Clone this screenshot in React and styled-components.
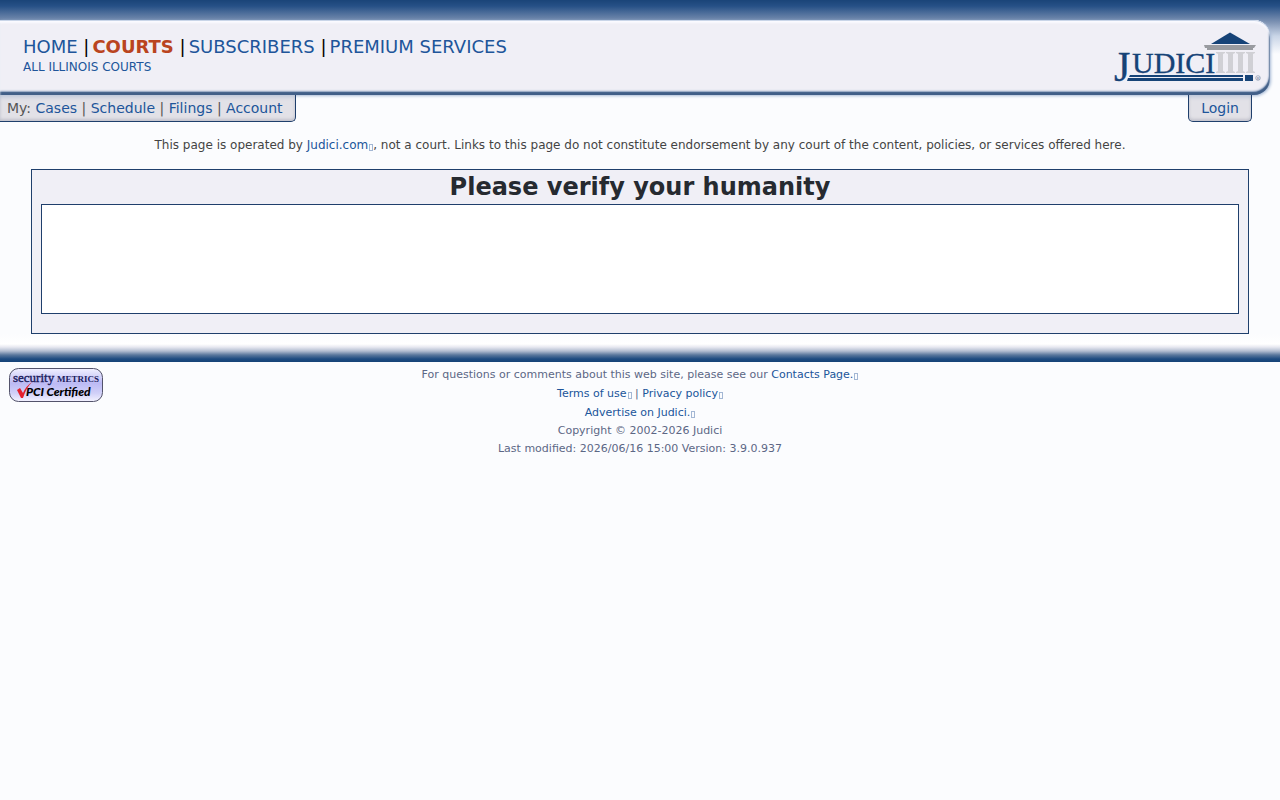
import React from 'react'
import styled, { createGlobalStyle } from 'styled-components'

const GlobalStyle = createGlobalStyle`
  body {
    margin: 0;
    background-color: #fbfcfe;
    color: #444;
    font-family: "DejaVu Sans", sans-serif;
    font-size: 12px;
  }
`

const Link = styled.a`
  color: #20559a;
  text-decoration: none;

  &:hover {
    text-decoration: underline;
  }
`

const Top = styled.div`
  padding: 20px 10px 0 0;
  background: linear-gradient(#1a4478 0, #265086 6px, #7d92b3 22px, #c9d5e7 36px, #fbfcfe 54px);
`

const Header = styled.header`
  box-sizing: border-box;
  display: flex;
  justify-content: space-between;
  align-items: flex-start;
  height: 75px;
  padding: 12px 9px 0 23px;
  border-radius: 0 16px 16px 0;
  background-color: #f0eff6;
  box-shadow: inset 0 1px 0 #c9d5e8, inset 0 3px 2px #fafaff, inset -1px -3px 1px #415f88,
    inset -1px -4px 2px #91a5c3, 1px 1px 3px #a7bad6;
`

const MainNav = styled.nav`
  display: flex;
  padding-top: 4px;
  font-size: 18px;
  line-height: 21px;
  color: #000;
`

const NavItem = styled(Link)`
  color: ${({ $active }) => ($active ? '#ba4420' : '#20559a')};
  font-weight: ${({ $active }) => ($active ? 'bold' : 'normal')};
`

const Divider = styled.span`
  padding-right: 3px;
  white-space: pre;
`

const SubNav = styled.nav`
  line-height: 20px;
`

const Tabs = styled.div`
  display: flex;
  justify-content: space-between;
  padding-right: 28px;
`

const Tab = styled.nav`
  box-sizing: border-box;
  height: 27px;
  padding: ${({ $left }) => ($left ? '0 12px 0 7px' : '0 12px')};
  border: 1px solid #1f3f6c;
  border-top: 0;
  border-left-width: ${({ $left }) => ($left ? '0' : '1px')};
  border-radius: ${({ $left }) => ($left ? '0 0 5px 0' : '0 0 5px 5px')};
  background-color: #e2e1e7;
  box-shadow: inset 0 4px 4px -2px #b8c4d8, inset 0 -2px 3px #c3c3cc;
  color: #555;
  font-size: 14px;
  line-height: 26px;
`

const Notice = styled.p`
  margin: 0;
  padding: 15px 16px;
  line-height: 17px;
  text-align: center;
`

const Missing = styled.span`
  display: inline-block;
  box-sizing: border-box;
  width: 4px;
  height: 7px;
  margin-left: 1px;
  border: 1px solid #a3b7d4;
  vertical-align: -2px;
`

const Panel = styled.main`
  margin: 0 31px;
  padding: 0 9px 19px;
  border: 1px solid #1f3f6c;
  background-color: #f0eff6;
`

const Title = styled.h1`
  margin: 0;
  padding: 3px 0;
  color: #262a30;
  font-size: 24px;
  line-height: 28px;
  text-align: center;
`

const Challenge = styled.div`
  min-height: 108px;
  border: 1px solid #1f3f6c;
  background-color: #fff;
`

const Band = styled.div`
  height: 28px;
  background: linear-gradient(#fbfcfe 0, #fff 10px, #e8e9f1 13px, #b3bed1 17px, #59779c 21px, #1d4b80 25px, #164377 28px);
`

const Footer = styled.footer`
  display: grid;
  grid-template-columns: 94px 1fr 94px;
  padding: 3px 9px;
  color: #5c6785;
  font-size: 11px;
  line-height: 19px;
  text-align: center;
`

const BadgeLink = styled.a`
  padding-top: 3px;
`

const Line = styled.div``

const SmallLine = styled(Line)`
  line-height: 18px;
`

const Picture = styled.svg`
  display: block;
  overflow: visible;
`

function External({ children }) {
  return (
    <>
      <Link href="#">{children}</Link>
      <Missing />
    </>
  )
}

function Logo() {
  return (
    <Picture width="147" height="51" viewBox="0 0 147 51" role="img" aria-label="Judici">
      <path d="M116 0.5 136 12H97Z" fill="#164377" />
      <path d="M90 13H142L140 16H139V18H93V16H91Z" fill="#999ba0" />
      <g fill="#d0d0d5">
        {[104, 114, 124, 134].map((x) => (
          <path key={x} d={`M${x - 2} 20h9v1l-2 1v17l2 1v1h-9v-1l2-1v-17l-2-1z`} />
        ))}
      </g>
      <g fill="#164377" stroke="#164377" strokeWidth="0.3" fontFamily="Liberation Serif, serif">
        <text x="0" y="49" fontSize="42">J</text>
        <text x="18" y="41" fontSize="30">UDICI</text>
      </g>
      <path d="M16 43H129V45H15ZM14 46H129V49H13ZM131 43H139V49H131Z" fill="#164377" />
      <circle cx="144" cy="46" r="2.3" fill="none" stroke="#8795aa" strokeWidth="0.7" />
      <text x="142.7" y="47.5" fontSize="4" fill="#61738e" fontFamily="Liberation Sans, sans-serif">R</text>
    </Picture>
  )
}

function Badge() {
  return (
    <Picture width="94" height="34" viewBox="0 0 94 34" role="img" aria-label="SecurityMetrics PCI Certified">
      <defs>
        <linearGradient id="badge" x1="0" y1="0" x2="0" y2="1">
          <stop offset="0" stopColor="#f1f0ff" />
          <stop offset="0.45" stopColor="#bcbaf4" />
          <stop offset="0.75" stopColor="#d1d0f8" />
          <stop offset="1" stopColor="#f4f3ff" />
        </linearGradient>
      </defs>
      <rect x="0.5" y="0.5" width="93" height="33" rx="9" fill="url(#badge)" stroke="#53536b" />
      <g fill="#20205d" fontFamily="Liberation Serif, serif">
        <text x="4" y="14" fontSize="13" stroke="#20205d" strokeWidth="0.4">security</text>
        <text x="48" y="14" fontSize="9" fontWeight="bold">METRICS</text>
      </g>
      <text x="17" y="28" fontSize="12" fontFamily="Lato, sans-serif" fontWeight="900" fontStyle="italic" fill="#000">
        PCI Certified
      </text>
      <path d="M8 22 11 20 14 25Q17 18 23 14Q17 20 14 30H12Z" fill="#e5202d" />
    </Picture>
  )
}

function App() {
  return (
    <>
      <GlobalStyle />
      <Top>
        <Header>
          <div>
            <MainNav>
              <NavItem href="#">HOME</NavItem>
              <Divider> |</Divider>
              <NavItem href="#" $active>COURTS</NavItem>
              <Divider> |</Divider>
              <NavItem href="#">SUBSCRIBERS</NavItem>
              <Divider> |</Divider>
              <NavItem href="#">PREMIUM SERVICES</NavItem>
            </MainNav>
            <SubNav>
              <Link href="#">ALL ILLINOIS COURTS</Link>
            </SubNav>
          </div>
          <Link href="#">
            <Logo />
          </Link>
        </Header>
      </Top>
      <Tabs>
        <Tab $left>
          My: <Link href="#">Cases</Link> | <Link href="#">Schedule</Link> | <Link href="#">Filings</Link> |{' '}
          <Link href="#">Account</Link>
        </Tab>
        <Tab>
          <Link href="#">Login</Link>
        </Tab>
      </Tabs>
      <Notice>
        This page is operated by <External>Judici.com</External>, not a court. Links to this page do not constitute
        endorsement by any court of the content, policies, or services offered here.
      </Notice>
      <Panel>
        <Title>Please verify your humanity</Title>
        <Challenge />
      </Panel>
      <Band />
      <Footer>
        <BadgeLink href="#">
          <Badge />
        </BadgeLink>
        <div>
          <Line>
            For questions or comments about this web site, please see our <External>Contacts Page.</External>
          </Line>
          <Line>
            <External>Terms of use</External> | <External>Privacy policy</External>
          </Line>
          <Line>
            <External>Advertise on Judici.</External>
          </Line>
          <SmallLine>Copyright © 2002-2026 Judici</SmallLine>
          <SmallLine>Last modified: 2026/06/16 15:00 Version: 3.9.0.937</SmallLine>
        </div>
      </Footer>
    </>
  )
}

export default App
